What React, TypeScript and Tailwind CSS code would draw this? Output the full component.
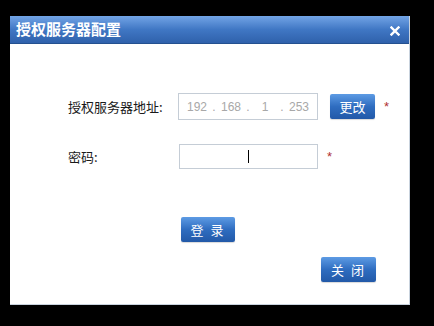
import { useState } from "react";

const cjk = "font-['Noto_Sans_CJK_SC',sans-serif]";

function BlueButton({ label, className = "" }: { label: string; className?: string }) {
  return (
    <button
      className={`h-[25px] rounded-[2px] bg-gradient-to-b from-[#5d9be4] via-[#2f6dc0] to-[#2259a8] text-white text-[13px] leading-none shadow-[0_1px_1px_rgba(0,0,0,0.15)] ${cjk} ${className}`}
    >
      {label}
    </button>
  );
}

export default function App() {
  const [ip] = useState(["192", "168", "1", "253"]);

  return (
    <div className="w-[434px] h-[326px] bg-black pt-4 pl-[10px]">
      {/* dialog */}
      <div className="w-[400px] h-[289px] bg-white flex flex-col border-r border-b border-[#c9d3de]">
        {/* title bar */}
        <div className="h-[28px] flex items-center justify-between pl-[6px] pr-[9px] bg-gradient-to-b from-[#72a4e6] via-[#4077c4] to-[#2f61ab] border-b border-[#24508f]">
          <span className={`text-white text-[15px] font-bold ${cjk}`}>授权服务器配置</span>
          <svg width="10" height="10" viewBox="0 0 10 10" className="mt-[2px]">
            <path d="M1.5 1.5 L8.5 8.5 M8.5 1.5 L1.5 8.5" stroke="white" strokeWidth="2.4" strokeLinecap="square" />
          </svg>
        </div>

        {/* body */}
        <div className="flex-1 flex flex-col pt-[49px] pl-[58px]">
          <div className="flex items-center">
            <span className={`w-[110px] text-[13px] text-[#1a1a1a] ${cjk}`}>授权服务器地址:</span>
            <div className="w-[140px] h-[27px] border border-[#c5cdd6] flex items-center pl-[6px] text-[12px] text-[#a8a8a8] font-['Liberation_Sans',sans-serif]">
              {ip.map((seg, i) => (
                <div key={i} className="flex items-center">
                  <span className="w-[24px] text-center">{seg}</span>
                  {i < ip.length - 1 && <span className="w-[10px] text-center">.</span>}
                </div>
              ))}
            </div>
            <BlueButton label="更改" className="w-[45px] ml-3" />
            <span className="ml-[9px] text-[#b03030] text-[13px] font-['Liberation_Sans',sans-serif]">*</span>
          </div>

          <div className="flex items-center mt-[24px]">
            <span className={`w-[111px] text-[13px] text-[#1a1a1a] ${cjk}`}>密码:</span>
            <div className="w-[139px] h-[25px] border border-[#c5cdd6] flex items-center justify-center">
              <span className="w-px h-[13px] bg-black" />
            </div>
            <span className="ml-[9px] text-[#b03030] text-[13px] font-['Liberation_Sans',sans-serif]">*</span>
          </div>

          <div className="mt-[48px] pl-[113px]">
            <BlueButton label="登 录" className="w-[54px] tracking-[2px]" />
          </div>

          <div className="mt-[15px] pl-[253px]">
            <BlueButton label="关 闭" className="w-[55px] tracking-[2px]" />
          </div>
        </div>
      </div>
    </div>
  );
}
